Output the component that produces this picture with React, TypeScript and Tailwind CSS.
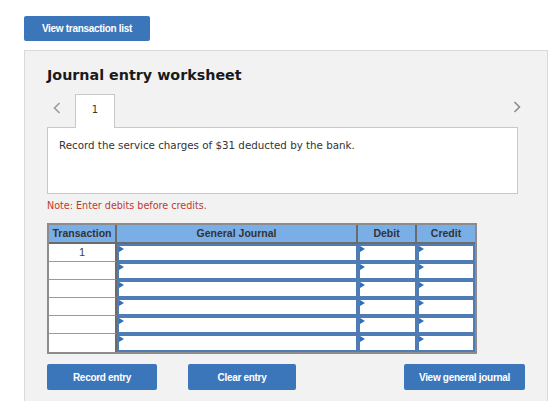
import React from "react";

const rows = ["1", "", "", "", "", ""];

const verdana = { fontFamily: "'DejaVu Sans', Verdana, sans-serif" };
const arial = { fontFamily: "'Liberation Sans', Arial, sans-serif" };

function InputCell({ width }: { width: string }) {
  return (
    <div className={`relative h-full border-2 border-[#4f7cb5] bg-white ${width}`}>
      <span className="absolute left-0 top-0 w-0 h-0 border-y-[3px] border-y-transparent border-l-[5px] border-l-[#2f6fc0]" />
    </div>
  );
}

function BlueButton({ label, className }: { label: string; className: string }) {
  return (
    <button
      type="button"
      className={`rounded-[2px] bg-[#3b76bb] text-white text-[10px] font-bold tracking-[-0.3px] ${className}`}
      style={arial}
    >
      {label}
    </button>
  );
}

export default function App() {
  return (
    <div className="w-[560px] h-[401px] overflow-hidden bg-white">
      <div className="flex pt-4 pl-6">
        <BlueButton label="View transaction list" className="w-[126px] h-[25px]" />
      </div>
      <div className="ml-6 mt-[9px] w-[524px] h-[360px] border border-[#d9d9d9] bg-[#f2f2f2] pl-[22px] pt-[15px]">
        <h1 className="text-[14.3px] font-bold text-[#1a1a1a] leading-[18px]" style={verdana}>
          Journal entry worksheet
        </h1>
        <div className="mt-[11px] flex items-end h-[33px] w-[470px] relative">
          <span className="absolute left-[6px] top-[7px]">
            <svg width="8" height="12" viewBox="0 0 8 12" fill="none">
              <path d="M6.5 1 L1.5 6 L6.5 11" stroke="#9a9a9a" strokeWidth="1.6" />
            </svg>
          </span>
          <div
            className="ml-[28px] w-[40px] h-[34px] border border-[#c8c8c8] border-b-0 bg-white relative z-10 flex justify-center pt-[7px] text-[10px] text-[#333]"
            style={verdana}
          >
            1
          </div>
          <span className="absolute right-[-4px] top-[6px]">
            <svg width="8" height="12" viewBox="0 0 8 12" fill="none">
              <path d="M1.5 1 L6.5 6 L1.5 11" stroke="#8c8c8c" strokeWidth="1.6" />
            </svg>
          </span>
        </div>
        <div
          className="-mt-px w-[471px] h-[67px] border border-[#c8c8c8] bg-white px-[11px] pt-[10px] text-[10.3px] text-[#333]"
          style={verdana}
        >
          Record the service charges of $31 deducted by the bank.
        </div>
        <p className="mt-[5px] text-[9.6px] leading-[14px] text-[#c0392b]" style={verdana}>
          Note: Enter debits before credits.
        </p>
        <div className="mt-[10px] w-[430px] border-2 border-[#8c8c8c] text-[11px]" style={arial}>
          <div className="flex h-[19px] bg-[#7aaee6] border-b-2 border-[#6b6b6b] text-[#333] font-bold text-[10.5px]">
            <div className="w-[68px] border-r-2 border-[#6b6b6b] flex items-center justify-center">Transaction</div>
            <div className="w-[241px] border-r-2 border-[#6b6b6b] flex items-center justify-center">General Journal</div>
            <div className="w-[59px] border-r-2 border-[#6b6b6b] flex items-center justify-center">Debit</div>
            <div className="flex-1 flex items-center justify-center">Credit</div>
          </div>
          {rows.map((r, i) => (
            <div key={i} className="flex h-[18px]">
              <div
                className={`w-[68px] bg-white border-r-2 border-[#6b6b6b] flex items-center justify-center text-[#444] ${
                  i < rows.length - 1 ? "border-b border-b-[#9a9a9a]" : ""
                }`}
              >
                {r}
              </div>
              <InputCell width="w-[241px]" />
              <InputCell width="w-[59px]" />
              <InputCell width="flex-1" />
            </div>
          ))}
        </div>
        <div className="mt-[10px] flex w-[478px]">
          <BlueButton label="Record entry" className="w-[110px] h-[26px]" />
          <BlueButton label="Clear entry" className="ml-[31px] w-[108px] h-[26px]" />
          <BlueButton label="View general journal" className="ml-auto w-[121px] h-[26px]" />
        </div>
      </div>
    </div>
  );
}
